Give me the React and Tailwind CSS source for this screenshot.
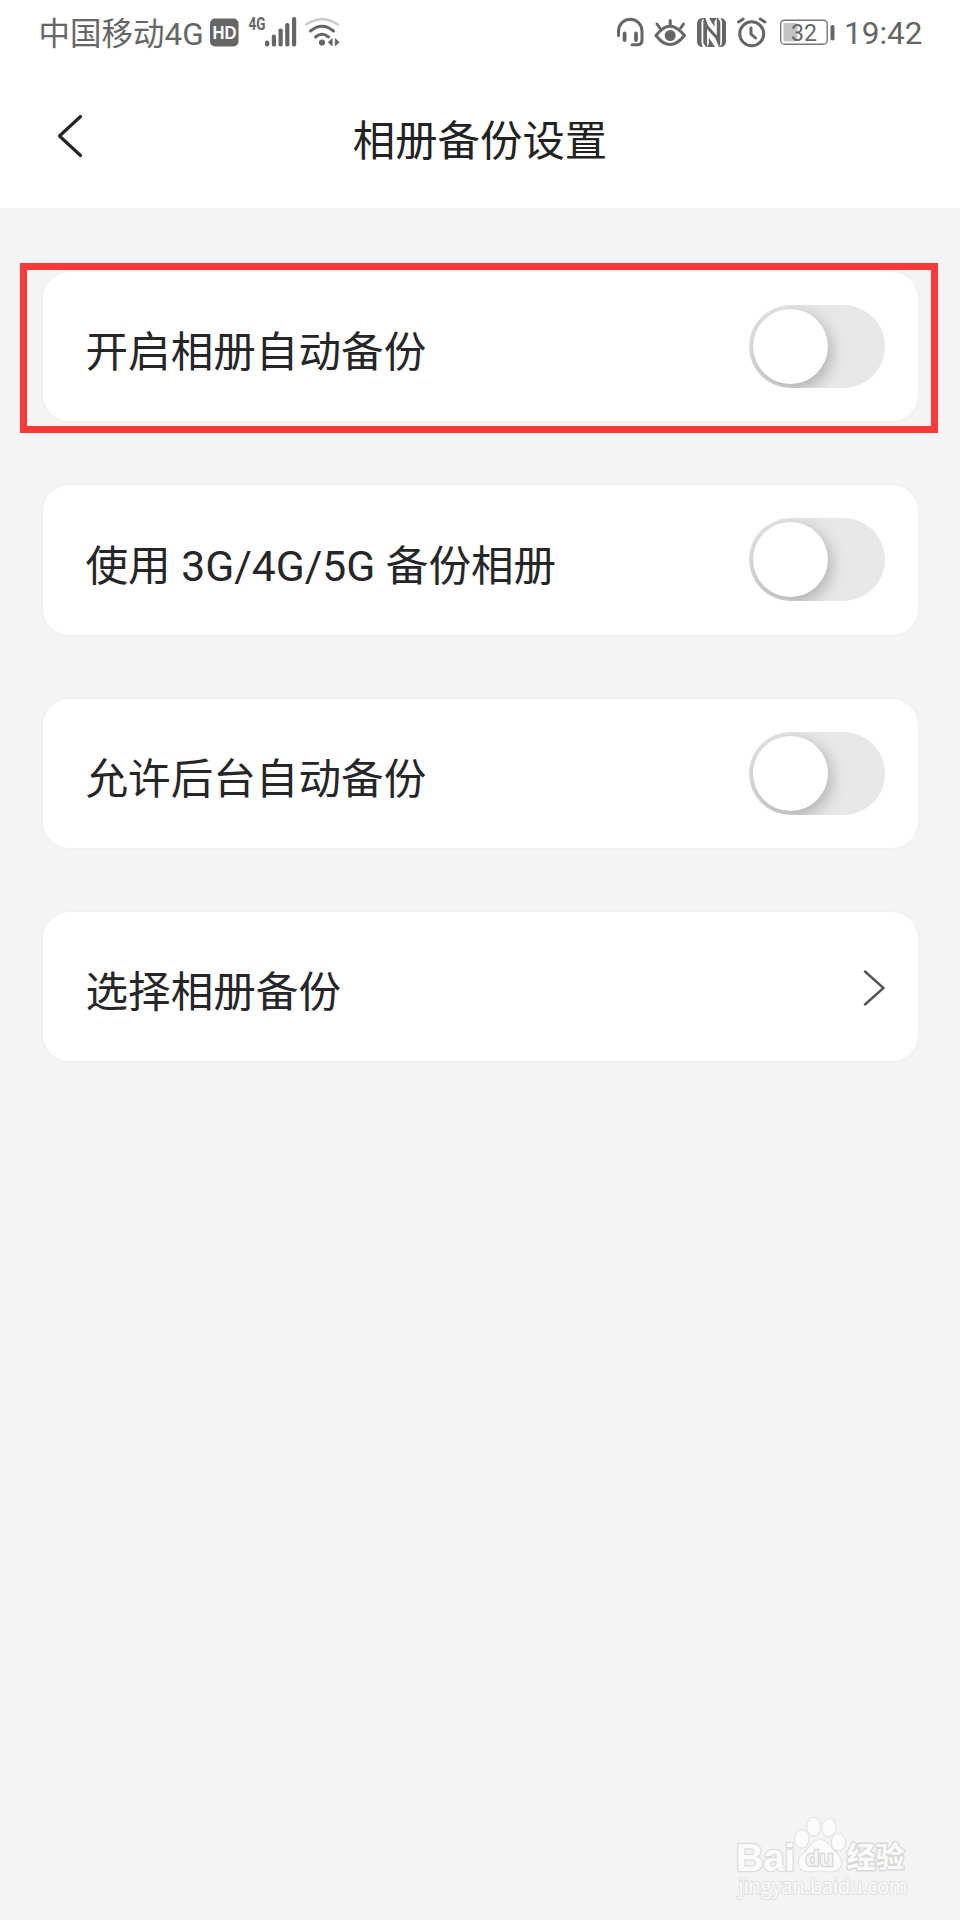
const FONT = "font-[Roboto,'Noto_Sans_CJK_SC',sans-serif]";

function LeftIcons() {
  return (
    <svg className="block h-[70px] w-[140px] shrink-0" viewBox="205 0 140 70" fill="#666">
      <rect x="210" y="18.5" width="28.5" height="28" rx="5" />
      <text x="212.500" y="39" fontFamily="Liberation Sans" fontWeight="700" fontSize="18.500" fill="#fff" textLength="24" lengthAdjust="spacingAndGlyphs">HD</text>
      <text x="248.500" y="30" fontFamily="Roboto" fontWeight="700" fontSize="17.500" textLength="17" lengthAdjust="spacingAndGlyphs">4G</text>
      <rect x="265" y="40.500" width="4.200" height="6" rx="1.8" />
      <rect x="271.800" y="34.500" width="4.200" height="12" rx="1.8" />
      <rect x="278.500" y="28.500" width="4.200" height="18" rx="1.8" />
      <rect x="285.200" y="23" width="4.200" height="23.500" rx="1.8" />
      <rect x="292" y="17" width="4.200" height="29.500" rx="1.8" />
      <g fill="none" strokeLinecap="round" strokeWidth="3">
        <path d="M306.300 24.500 Q322 14 337.800 24.500" stroke="#ccc" strokeWidth="2.600" />
        <path d="M310.500 31 Q322 21.500 333.500 31" stroke="#666" />
        <path d="M315.500 37 Q322 31.500 328.500 37" stroke="#666" />
      </g>
      <circle cx="322" cy="42.500" r="3.100" />
      <path d="M332.200 38.500v7.500l-4-3.750zM335.200 38.500v7.500l4-3.750z" stroke="#666" strokeWidth=".6" />
    </svg>
  );
}

function RightIcons() {
  return (
    <svg className="block h-[70px] w-[224px] shrink-0" viewBox="614 0 224 70" fill="#666">
      <g fill="none" stroke="#666" strokeWidth="3" strokeLinecap="round" strokeLinejoin="round">
        <path d="M618.500 35.500V31A11.750 11.750 0 0 1 642 31V40Q642 44.800 637 44.800H632" />
        <path d="M624.600 33.500v6.500M636 33.500v6.500" strokeWidth="3.800" />
        <path d="M656 35.500Q663 26.200 670 26.200T684.500 35.500Q677 44.600 670 44.600T656 35.500Z" />
        <path d="M670.200 20.500v5M657 24l2.800 4M683.500 24l-2.800 4" />
      </g>
      <circle cx="670.200" cy="35.500" r="5.500" />
      <rect x="697" y="18" width="29" height="29" rx="5.500" />
      <g fill="#fff">
        <path d="M701.500 22Q702 19 704 18.500L703.300 21V43L706 47H703Q701.500 45 701.500 43Z" />
        <path d="M707 29L715.500 38.500L719 47H715L708.800 37.500V44L707 47Z" />
        <path d="M705.500 18H709L714.500 27V21.500L716.800 18V35.500L708 25.500Z" />
        <path d="M718 18H720.500L722 21.500V43Q721.500 46 719.500 46.500L720.300 43V22Z" />
      </g>
      <g fill="none" stroke="#666" strokeWidth="3" strokeLinecap="round">
        <circle cx="751.700" cy="33.800" r="12" />
        <path d="M738.500 22l4.700-3M764.900 22l-4.700-3" />
        <path d="M751 28v6l4.500 4" />
      </g>
      <rect x="780.700" y="20.200" width="46.500" height="24" rx="3.800" fill="#fff" stroke="#777" strokeWidth="1.400" />
      <rect x="783.500" y="23" width="14" height="18.500" rx="2" fill="#c4c4c4" />
      <text x="791" y="40.800" fontFamily="Roboto" fontSize="23" textLength="26" lengthAdjust="spacingAndGlyphs">32</text>
      <rect x="830.500" y="25" width="4" height="15.500" rx="1.800" />
    </svg>
  );
}

function Toggle() {
  return (
    <div className="h-[83px] w-[136px] overflow-hidden rounded-full bg-[#e8e8e8] pt-1 pl-[3.5px]">
      <div className="size-[75px] rounded-full bg-white shadow-[2px_5px_16px_1px_rgba(0,0,0,0.25)]" />
    </div>
  );
}

function Chevron() {
  return (
    <svg className="mt-0.5 h-[38px] w-[24px]" viewBox="0 0 24 38" fill="none" stroke="#555" strokeWidth="2.500">
      <path d="M4 2.500L22.500 19L4 35.500" strokeLinecap="round" />
    </svg>
  );
}

function Row({ label, children }) {
  return (
    <div className="flex h-[149.3px] items-center justify-between rounded-[26px] bg-white pr-[32.5px] pl-[43px] shadow-[0_0_2px_1px_rgba(0,0,0,0.028)]">
      <span className="pt-3 text-[42.6px] leading-none whitespace-pre text-[#262628]">{label}</span>
      {children}
    </div>
  );
}

function Watermark() {
  return (
    <svg className="absolute right-[42px] bottom-[12px] h-[98px] w-[184px] overflow-visible" viewBox="734 1810 184 98" fill="#fcfcfc" stroke="#dcdcdc" strokeWidth="1.6" paintOrder="stroke" strokeLinejoin="round">
      <text x="736" y="1870.500" fontFamily="Liberation Sans" fontWeight="700" fontSize="38" textLength="59" lengthAdjust="spacingAndGlyphs" strokeWidth="2.600">Bai</text>
      <ellipse cx="801.700" cy="1839" rx="6.700" ry="8.700" />
      <ellipse cx="813.800" cy="1826.700" rx="6.500" ry="9" />
      <ellipse cx="829" cy="1827.700" rx="6.700" ry="8.700" transform="rotate(10 829 1827.700)" />
      <ellipse cx="838.500" cy="1842.300" rx="6.700" ry="8.500" />
      <path d="M820 1840C812 1840 809 1849 803 1854C796 1860 798 1871 808 1871.500C813 1872 816 1870.500 820 1870.500S827 1872 832 1871.500C842 1871 844 1860 837 1854C831 1849 828 1840 820 1840Z" />
      <text x="805.500" y="1866" fontFamily="Liberation Sans" fontWeight="700" fontSize="22" textLength="28" lengthAdjust="spacingAndGlyphs" fill="#f4f4f4" stroke="#d4d4d4" strokeWidth="2.400">du</text>
      <text x="846.500" y="1868" fontFamily="Noto Sans CJK SC" fontWeight="700" fontSize="29" textLength="58" strokeWidth="2.800" stroke="#d8d8d8">经验</text>
      <text x="738.500" y="1893.500" fontFamily="Open Sans" fontWeight="500" fontSize="21.500" textLength="169" lengthAdjust="spacingAndGlyphs" strokeWidth="2.200" stroke="#e0e0e0">jingyan.baidu.com</text>
    </svg>
  );
}

export default function App() {
  return (
    <div className={`relative flex h-[1920px] w-[960px] flex-col bg-[#f4f4f4] ${FONT}`}>
      <header className="h-[208px] bg-white">
        <div className="flex h-[70px] items-start text-[31.5px] text-[#666]">
          <span className="ml-[38.5px] w-[166.5px] shrink-0 pt-[17.5px] leading-[34px] whitespace-nowrap">中国移动4G</span>
          <LeftIcons />
          <div className="grow" />
          <RightIcons />
          <span className="w-[122px] shrink-0 pt-[17px] pl-[6px] leading-[34px] whitespace-nowrap">19:42</span>
        </div>
        <div className="flex h-[138px] items-start justify-between px-[55px]">
          <svg className="mt-[43px] h-[46px] w-[30px]" viewBox="0 0 30 46" fill="none" stroke="#262628" strokeWidth="3.200">
            <path d="M25.500 3.500L4.500 23L25.500 42.500" strokeLinecap="round" strokeLinejoin="round" />
          </svg>
          <h1 className="pt-[51.4px] text-[42.4px] leading-[42px] text-[#222]">相册备份设置</h1>
          <div className="w-[30px]" />
        </div>
      </header>
      <main className="flex flex-col gap-16 pt-16 pr-[42.5px] pl-[42.5px]">
        <div className="relative">
          <Row label="开启相册自动备份"><Toggle /></Row>
          <div className="pointer-events-none absolute -top-[9px] -right-[20.5px] -bottom-[11.7px] -left-[22.5px] border-[7px] border-[#fd3838]" />
        </div>
        <Row label="使用 3G/4G/5G 备份相册"><Toggle /></Row>
        <Row label="允许后台自动备份"><Toggle /></Row>
        <Row label="选择相册备份"><Chevron /></Row>
      </main>
      <Watermark />
    </div>
  );
}
